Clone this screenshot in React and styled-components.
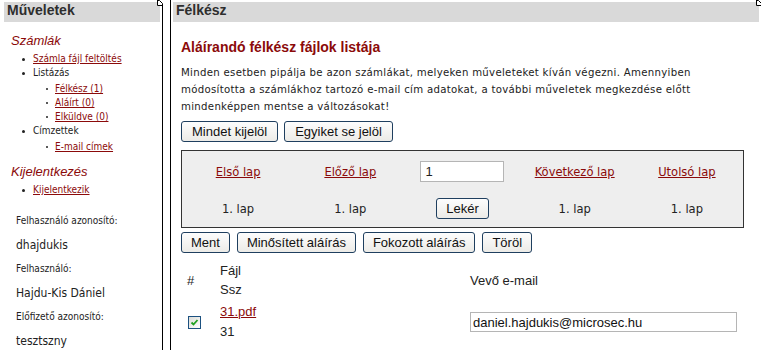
import React from 'react';
import styled, { createGlobalStyle } from 'styled-components';

const GlobalStyle = createGlobalStyle`
  html, body {
    margin: 0;
    padding: 0;
    background: #fff;
    overflow: hidden;
  }
`;

const Page = styled.div`
  display: flex;
  width: 761px;
  height: 350px;
  overflow: hidden;
  font-family: 'DejaVu Sans Condensed', 'DejaVu Sans', sans-serif;
  color: #222;
`;

const Panel = styled.div`
  position: relative;
  box-sizing: border-box;
  padding-top: 2px;
  ${p => p.side
    ? 'width: 163px; border-right: 1px solid #000;'
    : 'flex: 1; margin-left: 7px; border-left: 1px solid #000;'}
`;

const PanelHead = styled.div`
  height: 20px;
  line-height: 20px;
  background: #d9d9d9;
  margin: ${p => (p.side ? '0 2px 0 4px' : '0 2px 0 2px')};
  padding-left: 3px;
  font: bold 14px 'Liberation Sans', Arial, sans-serif;
  color: #2e2e2e;
`;

const Fold = styled.svg`
  position: absolute;
  top: 0;
  right: -1px;
  width: 6px;
  height: 6px;
  background: #fff;
`;

const SideBody = styled.div`
  padding: 10px 0 0 11px;
`;

const SectionTitle = styled.div`
  font: italic 13px 'Liberation Sans', Arial, sans-serif;
  color: #8b0a0a;
  line-height: 18px;
  margin-top: ${p => p.gap || 0}px;
`;

const List = styled.ul`
  list-style: none;
  margin: 2px 0 0 0;
  padding: 0 0 0 22px;
  font-size: 10px;
`;

const Item = styled.li`
  position: relative;
  line-height: 14px;
  &::before {
    content: '';
    position: absolute;
    left: ${p => (p.nested ? -9 : -11)}px;
    top: 6px;
    width: ${p => (p.nested ? 2 : 3)}px;
    height: ${p => (p.nested ? 2 : 3)}px;
    border-radius: 50%;
    background: #222;
  }
`;

const Link = styled.a`
  color: #8b0a0a;
  text-decoration: underline;
  cursor: pointer;
`;

const Info = styled.div`
  padding: 12px 0 0 5px;
`;

const InfoLabel = styled.div`
  font-size: 10px;
  line-height: 24px;
`;

const InfoValue = styled.div`
  font-size: 12px;
  line-height: 24px;
`;

const MainBody = styled.div`
  padding: 15px 0 0 10px;
`;

const Title = styled.h2`
  margin: 0;
  font: bold 14px 'Liberation Sans', Arial, sans-serif;
  color: #8b0a0a;
  line-height: 20px;
`;

const Text = styled.p`
  margin: 7px 0 0 0;
  font-size: 11.3px;
  letter-spacing: 0.3px;
  line-height: 17px;
  white-space: nowrap;
`;

const ButtonRow = styled.div`
  display: flex;
  gap: ${p => p.gap || 6}px;
  margin-top: ${p => p.top || 0}px;
`;

const Button = styled.button`
  height: 21px;
  padding: 0 ${p => p.pad || 10}px;
  border: 1px solid #1f3f5f;
  border-radius: 3px;
  background: linear-gradient(#fdfdfd, #ecebe7);
  font: 13px 'Liberation Sans', Arial, sans-serif;
  color: #111;
  line-height: 19px;
  cursor: pointer;
`;

const Pager = styled.div`
  box-sizing: border-box;
  width: 563px;
  margin-top: 8px;
  border: 1px solid #333;
  background: #eeeeee;
  display: grid;
  grid-template-columns: repeat(5, 1fr);
  grid-template-rows: 37px 37px;
  padding-top: 2px;
  font-size: 12.8px;
`;

const Cell = styled.div`
  display: flex;
  align-items: center;
  justify-content: center;
`;

const PageInput = styled.input`
  box-sizing: border-box;
  width: 84px;
  height: 21px;
  border: 1px solid #b5b5b5;
  padding: 0 4px;
  font: 13px 'Liberation Sans', Arial, sans-serif;
  color: #222;
  background: #fff;
`;

const Table = styled.div`
  display: grid;
  grid-template-columns: 39px 250px 1fr;
  margin-top: 6px;
  font: 13px 'Liberation Sans', Arial, sans-serif;
  color: #222;
`;

const HeadCell = styled.div`
  display: flex;
  flex-direction: column;
  justify-content: center;
  line-height: 19px;
  padding-left: ${p => p.pl || 0}px;
  height: 42px;
`;

const DataCell = styled.div`
  display: flex;
  flex-direction: column;
  justify-content: center;
  line-height: 20px;
  height: 42px;
  padding-left: ${p => p.pl || 0}px;
`;

const Check = styled.span`
  box-sizing: border-box;
  display: inline-flex;
  align-items: center;
  justify-content: center;
  width: 13px;
  height: 13px;
  border: 1px solid #1c5180;
  background: linear-gradient(135deg, #dcdcd7, #fff);
`;

const EmailInput = styled.input`
  box-sizing: border-box;
  width: 267px;
  height: 20px;
  border: 1px solid #b5b5b5;
  padding: 0 2px;
  font: 13px 'Liberation Sans', Arial, sans-serif;
  color: #111;
  background: #fff;
`;

const FoldCorner = () => (
  <Fold viewBox="0 0 6 6">
    <path d="M0.5 0 V5.5 H6 M0.5 0.5 H2.5 L5.5 3.5 V6" fill="none" stroke="#000" strokeWidth="1" />
  </Fold>
);

const App = () => {
  return (
    <Page>
      <GlobalStyle />
      <Panel side>
        <FoldCorner />
        <PanelHead side>Műveletek</PanelHead>
        <SideBody>
          <SectionTitle>Számlák</SectionTitle>
          <List>
            <Item><Link>Számla fájl feltöltés</Link></Item>
            <Item>Listázás
              <List nested>
                <Item nested><Link>Félkész (1)</Link></Item>
                <Item nested><Link>Aláírt (0)</Link></Item>
                <Item nested><Link>Elküldve (0)</Link></Item>
              </List>
            </Item>
            <Item>Címzettek
              <List nested>
                <Item nested><Link>E-mail címek</Link></Item>
              </List>
            </Item>
          </List>
          <SectionTitle gap={9}>Kijelentkezés</SectionTitle>
          <List>
            <Item><Link>Kijelentkezik</Link></Item>
          </List>
          <Info>
            <InfoLabel>Felhasználó azonosító:</InfoLabel>
            <InfoValue>dhajdukis</InfoValue>
            <InfoLabel>Felhasználó:</InfoLabel>
            <InfoValue>Hajdu-Kis Dániel</InfoValue>
            <InfoLabel>Előfizető azonosító:</InfoLabel>
            <InfoValue>tesztszny</InfoValue>
          </Info>
        </SideBody>
      </Panel>
      <Panel>
        <FoldCorner />
        <PanelHead>Félkész</PanelHead>
        <MainBody>
          <Title>Aláírandó félkész fájlok listája</Title>
          <Text>
            Minden esetben pipálja be azon számlákat, melyeken műveleteket kíván végezni. Amennyiben<br />
            módosította a számlákhoz tartozó e-mail cím adatokat, a további műveletek megkezdése előtt<br />
            mindenképpen mentse a változásokat!
          </Text>
          <ButtonRow top={6}>
            <Button>Mindet kijelöl</Button>
            <Button>Egyiket se jelöl</Button>
          </ButtonRow>
          <Pager>
            <Cell><Link>Első lap</Link></Cell>
            <Cell><Link>Előző lap</Link></Cell>
            <Cell><PageInput defaultValue="1" /></Cell>
            <Cell><Link>Következő lap</Link></Cell>
            <Cell><Link>Utolsó lap</Link></Cell>
            <Cell>1. lap</Cell>
            <Cell>1. lap</Cell>
            <Cell><Button pad={9}>Lekér</Button></Cell>
            <Cell>1. lap</Cell>
            <Cell>1. lap</Cell>
          </Pager>
          <ButtonRow top={4} gap={7}>
            <Button pad={9}>Ment</Button>
            <Button pad={9}>Minősített aláírás</Button>
            <Button pad={9}>Fokozott aláírás</Button>
            <Button pad={9}>Töröl</Button>
          </ButtonRow>
          <Table>
            <HeadCell pl={6}>#</HeadCell>
            <HeadCell><span>Fájl</span><span>Ssz</span></HeadCell>
            <HeadCell>Vevő e-mail</HeadCell>
            <DataCell pl={7}>
              <Check>
                <svg width="9" height="9" viewBox="0 0 9 9">
                  <path d="M1.5 4.5 L3.5 6.5 L7.5 2" fill="none" stroke="#21a121" strokeWidth="1.8" />
                </svg>
              </Check>
            </DataCell>
            <DataCell><Link>31.pdf</Link><span>31</span></DataCell>
            <DataCell><EmailInput defaultValue="daniel.hajdukis@microsec.hu" /></DataCell>
          </Table>
        </MainBody>
      </Panel>
    </Page>
  );
};

export default App;
